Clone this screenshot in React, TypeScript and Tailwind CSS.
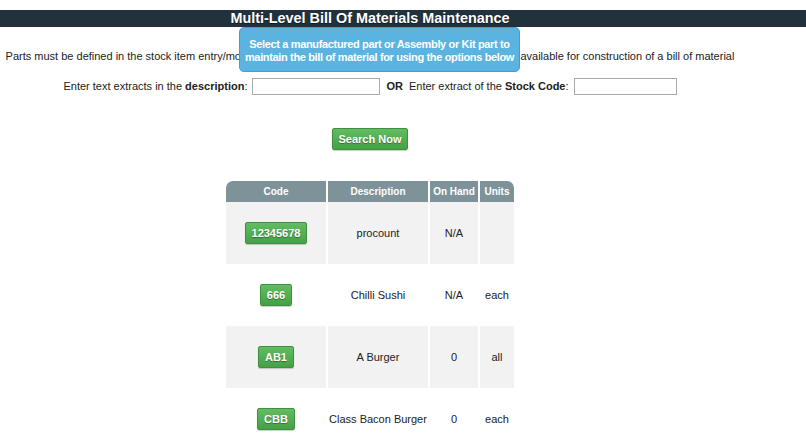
const rows = [
  { code: "12345678", description: "procount", onHand: "N/A", units: "" },
  { code: "666", description: "Chilli Sushi", onHand: "N/A", units: "each" },
  { code: "AB1", description: "A Burger", onHand: "0", units: "all" },
  { code: "CBB", description: "Class Bacon Burger", onHand: "0", units: "each" },
];

function GreenButton({ label }: { label: string }) {
  return (
    <button className="h-[22px] px-[6px] rounded-[2px] border border-[#3f8f3f] bg-gradient-to-b from-[#62bd62] to-[#46a046] text-white font-bold text-[11px] leading-[20px] [text-shadow:0_1px_1px_rgba(0,0,0,0.35)] shadow-[0_1px_1px_rgba(0,0,0,0.2)]">
      {label}
    </button>
  );
}

export default function App() {
  return (
    <div className="w-[806px] h-[442px] overflow-hidden bg-white pt-[10px] font-['Liberation_Sans',Arial,sans-serif] text-[11px] text-[#222]">
      <div className="h-[17px] bg-[#22323c]">
        <div className="relative w-[740px] text-center text-white font-bold text-[14.4px] leading-[17px] [text-shadow:0_1px_1px_rgba(0,0,0,0.5)]">
          Multi-Level Bill Of Materials Maintenance
          <div className="absolute left-[239px] top-[17px] z-10 w-[281px] h-[45px] rounded-[5px] border border-[#3e9fd5] bg-[#5bb4e0] pt-[10px] whitespace-nowrap tracking-[-0.35px] text-[11px] leading-[13px] text-white font-bold [text-shadow:none]">
            Select a manufactured part or Assembly or Kit part to
            <br />
            maintain the bill of material for using the options below
          </div>
        </div>
      </div>

      <div className="w-[740px] text-center">
        <p className="mt-[23px] leading-[13px] whitespace-nowrap">
          Parts must be defined in the stock item entry/modification screen as manufactured or assembly part to be available for construction of a bill of material
        </p>

        <div className="mt-[15px] flex items-center justify-center gap-[5px]">
          <span>
            Enter text extracts in the <b>description</b>:
          </span>
          <input className="w-[128px] h-[17px] border border-[#a9a9a9] bg-white" />
          <b className="ml-[1px]">OR</b>
          <span className="ml-[1px]">
            Enter extract of the <b>Stock Code</b>:
          </span>
          <input className="w-[103px] h-[17px] border border-[#a9a9a9] bg-white" />
        </div>

        <div className="mt-[33px]">
          <GreenButton label="Search Now" />
        </div>

        <table className="mx-auto mt-[31px] border-separate border-spacing-0 text-[11px]">
          <thead>
            <tr className="h-[21px] text-white font-bold text-[10px]">
              <th className="w-[102px] rounded-tl-[7px] bg-[#7e929a] border-r-2 border-white">Code</th>
              <th className="w-[102px] bg-[#7e929a] border-r-2 border-white">Description</th>
              <th className="w-[50px] bg-[#7e929a] border-r-2 border-white">On Hand</th>
              <th className="w-[34px] rounded-tr-[7px] bg-[#7e929a]">Units</th>
            </tr>
          </thead>
          <tbody>
            {rows.map((row, i) => (
              <tr key={row.code} className={`h-[62px] ${i % 2 === 0 ? "bg-[#f2f2f2]" : "bg-white"}`}>
                <td className="border-r-2 border-white">
                  <GreenButton label={row.code} />
                </td>
                <td className="border-r-2 border-white whitespace-nowrap">{row.description}</td>
                <td className="border-r-2 border-white">{row.onHand}</td>
                <td>{row.units}</td>
              </tr>
            ))}
          </tbody>
        </table>
      </div>
    </div>
  );
}
